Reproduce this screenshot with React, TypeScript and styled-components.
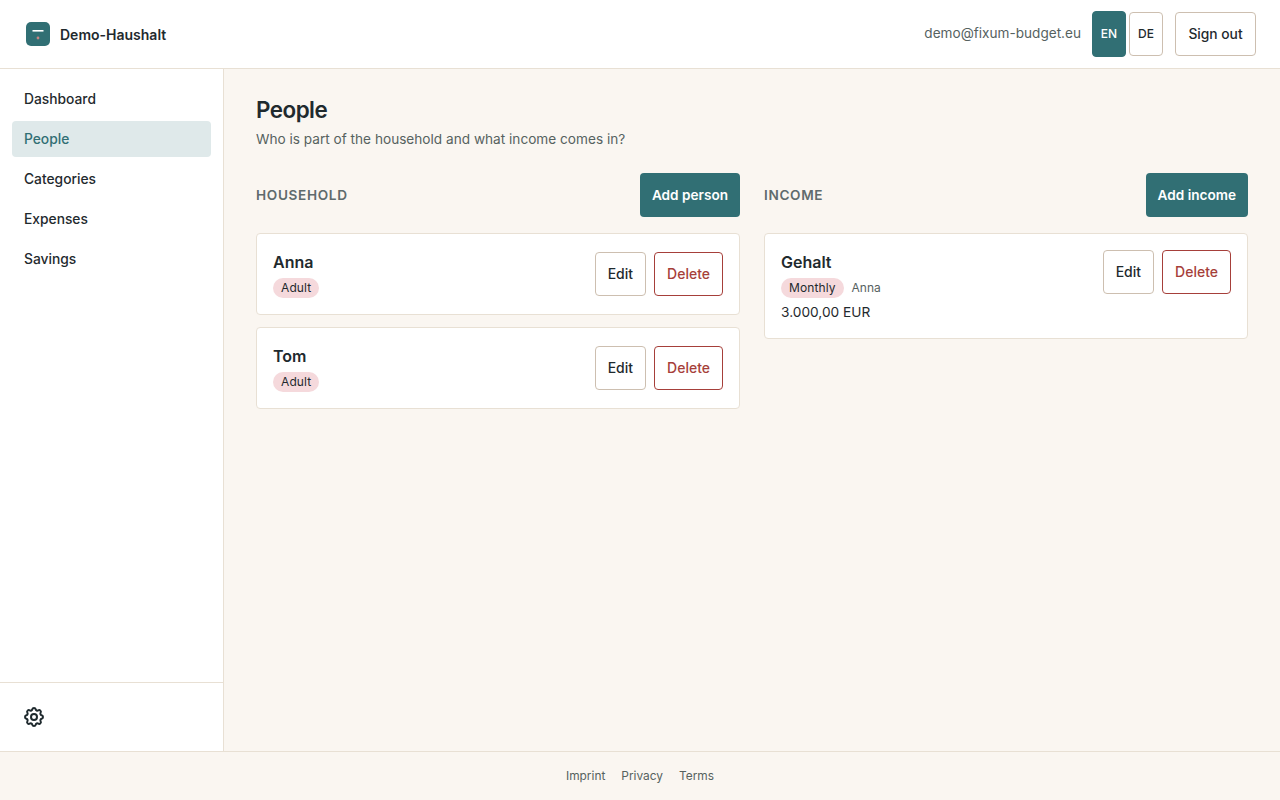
import { createGlobalStyle, styled } from "styled-components";
import { TbSettings } from "react-icons/tb";

const GlobalStyle = createGlobalStyle`
  html, body { margin: 0; padding: 0; height: 100%; }
  body {
    font-family: Inter, "Liberation Sans", sans-serif;
    color: #1f2a2e;
    background: #faf6f1;
  }
  * { box-sizing: border-box; }
`;

export default function App() {
  return (
    <>
      <GlobalStyle />
      <Page>
        <Header>
          <Brand>
            <Logo viewBox="0 0 24 24">
              <rect width="24" height="24" rx="5" fill="#316f74" />
              <rect x="6.5" y="8" width="11" height="1.6" fill="#fff" />
              <circle cx="12" cy="16" r="1.4" fill="#c98482" />
            </Logo>
            <BrandName>Demo-Haushalt</BrandName>
          </Brand>
          <HeaderRight>
            <Email>demo@fixum-budget.eu</Email>
            <LangGroup>
              <LangButton $active>EN</LangButton>
              <LangButton>DE</LangButton>
            </LangGroup>
            <SignOut>Sign out</SignOut>
          </HeaderRight>
        </Header>
        <Body>
          <Sidebar>
            <Nav>
              <NavItem>Dashboard</NavItem>
              <NavItem $active>People</NavItem>
              <NavItem>Categories</NavItem>
              <NavItem>Expenses</NavItem>
              <NavItem>Savings</NavItem>
            </Nav>
            <SidebarFoot>
              <TbSettings size={24} />
            </SidebarFoot>
          </Sidebar>
          <Main>
            <Title>People</Title>
            <Subtitle>Who is part of the household and what income comes in?</Subtitle>
            <Columns>
              <Column>
                <SectionHead>
                  <SectionTitle>HOUSEHOLD</SectionTitle>
                  <PrimaryButton>Add person</PrimaryButton>
                </SectionHead>
                <Card>
                  <CardInfo>
                    <Name>Anna</Name>
                    <MetaRow><Badge>Adult</Badge></MetaRow>
                  </CardInfo>
                  <Actions $center>
                    <Button>Edit</Button>
                    <DangerButton>Delete</DangerButton>
                  </Actions>
                </Card>
                <Card>
                  <CardInfo>
                    <Name>Tom</Name>
                    <MetaRow><Badge>Adult</Badge></MetaRow>
                  </CardInfo>
                  <Actions $center>
                    <Button>Edit</Button>
                    <DangerButton>Delete</DangerButton>
                  </Actions>
                </Card>
              </Column>
              <Column>
                <SectionHead>
                  <SectionTitle>INCOME</SectionTitle>
                  <PrimaryButton>Add income</PrimaryButton>
                </SectionHead>
                <Card>
                  <CardInfo>
                    <Name>Gehalt</Name>
                    <MetaRow>
                      <Badge>Monthly</Badge>
                      <Owner>Anna</Owner>
                    </MetaRow>
                    <Amount>3.000,00 EUR</Amount>
                  </CardInfo>
                  <Actions>
                    <Button>Edit</Button>
                    <DangerButton>Delete</DangerButton>
                  </Actions>
                </Card>
              </Column>
            </Columns>
          </Main>
        </Body>
        <Footer>
          <FooterLink>Imprint</FooterLink>
          <FooterLink>Privacy</FooterLink>
          <FooterLink>Terms</FooterLink>
        </Footer>
      </Page>
    </>
  );
}

const Page = styled.div`
  display: flex;
  flex-direction: column;
  height: 800px;
`;

const Header = styled.header`
  height: 69px;
  flex: none;
  display: flex;
  align-items: center;
  justify-content: space-between;
  padding: 0 24px 0 26px;
  background: #fff;
  border-bottom: 1px solid #e8e0d4;
`;

const Brand = styled.div`
  display: flex;
  align-items: center;
  gap: 10px;
`;

const Logo = styled.svg`
  width: 24px;
  height: 24px;
`;

const BrandName = styled.span`
  font-size: 14px;
  font-weight: 600;
`;

const HeaderRight = styled.div`
  display: flex;
  align-items: center;
`;

const Email = styled.span`
  font-size: 13.6px;
  line-height: 20px;
  padding-bottom: 2px;
  color: #56625f;
  margin-right: 11px;
`;

const LangGroup = styled.div`
  display: flex;
  gap: 3px;
  margin-right: 12px;
`;

const LangButton = styled.button<{ $active?: boolean }>`
  width: 34px;
  height: ${({ $active }) => ($active ? "46px" : "44px")};
  align-self: center;
  padding: 0 0 1px;
  font: 500 12px Inter, sans-serif;
  border-radius: 4px;
  border: 1px solid ${({ $active }) => ($active ? "#316f74" : "#cdbfb0")};
  background: ${({ $active }) => ($active ? "#316f74" : "#fff")};
  color: ${({ $active }) => ($active ? "#fff" : "#1f2a2e")};
`;

const Button = styled.button`
  height: 44px;
  padding: 0 12px 1px;
  font: 500 14px Inter, sans-serif;
  background: #fff;
  color: #1f2a2e;
  border: 1px solid #cdbfb0;
  border-radius: 4px;
`;

const SignOut = styled(Button)`
  width: 81px;
  padding: 0 0 1px;
  font-size: 13.8px;
`;

const DangerButton = styled(Button)`
  color: #a63f3a;
  border-color: #a63f3a;
`;

const PrimaryButton = styled(Button)`
  background: #316f74;
  border: none;
  color: #fff;
  font-size: 13.6px;
  font-weight: 600;
  padding: 0 12px;
`;

const Body = styled.div`
  flex: 1;
  display: flex;
  min-height: 0;
`;

const Sidebar = styled.aside`
  width: 224px;
  flex: none;
  display: flex;
  flex-direction: column;
  justify-content: space-between;
  background: #fff;
  border-right: 1px solid #e8e0d4;
`;

const Nav = styled.nav`
  display: flex;
  flex-direction: column;
  gap: 4px;
  padding: 12px;
`;

const NavItem = styled.a<{ $active?: boolean }>`
  height: 36px;
  display: flex;
  align-items: center;
  padding: 0 12px;
  font-size: 13.8px;
  font-weight: 500;
  border-radius: 4px;
  color: ${({ $active }) => ($active ? "#316f74" : "#1f2a2e")};
  background: ${({ $active }) => ($active ? "#dfe9ea" : "transparent")};
`;

const SidebarFoot = styled.div`
  height: 69px;
  display: flex;
  align-items: center;
  padding: 0 22px;
  border-top: 1px solid #e8e0d4;
`;

const Main = styled.main`
  flex: 1;
  padding: 24px 32px;
`;

const Title = styled.h1`
  margin: 2px 0 0;
  font-size: 22.4px;
  line-height: 30px;
  font-weight: 600;
  letter-spacing: -0.5px;
`;

const Subtitle = styled.p`
  margin: 4px 0 0;
  font-size: 13.63px;
  line-height: 20px;
  color: #56625f;
`;

const Columns = styled.div`
  display: grid;
  grid-template-columns: 484px 484px;
  gap: 24px;
  margin-top: 24px;
`;

const Column = styled.section`
  display: flex;
  flex-direction: column;
  gap: 12px;
`;

const SectionHead = styled.div`
  display: flex;
  align-items: center;
  justify-content: space-between;
  margin-bottom: 4px;
`;

const SectionTitle = styled.h2`
  margin: 0;
  font-size: 13.6px;
  font-weight: 600;
  letter-spacing: 0.65px;
  color: #5f6b6d;
`;

const Card = styled.div`
  display: flex;
  justify-content: space-between;
  padding: 16px;
  background: #fff;
  border: 1px solid #e8e0d4;
  border-radius: 4px;
`;

const CardInfo = styled.div`
  display: flex;
  flex-direction: column;
  gap: 4px;
`;

const Name = styled.div`
  font-size: 16px;
  line-height: 24px;
  font-weight: 600;
`;

const MetaRow = styled.div`
  display: flex;
  align-items: center;
  gap: 8px;
  height: 20px;
`;

const Badge = styled.span`
  height: 20px;
  display: inline-flex;
  align-items: center;
  padding: 0 8px 1px;
  font-size: 12px;
  font-weight: 400;
  letter-spacing: 0.1px;
  border-radius: 10px;
  background: #f5d9dc;
`;

const Owner = styled.span`
  font-size: 12px;
  color: #56625f;
  padding-bottom: 1px;
`;

const Amount = styled.div`
  font-size: 13.7px;
  line-height: 20px;
`;

const Actions = styled.div<{ $center?: boolean }>`
  display: flex;
  gap: 8px;
  align-self: ${({ $center }) => ($center ? "center" : "flex-start")};
`;

const Footer = styled.footer`
  height: 49px;
  flex: none;
  display: flex;
  align-items: center;
  justify-content: center;
  gap: 16px;
  padding-bottom: 2px;
  border-top: 1px solid #e8e0d4;
`;

const FooterLink = styled.a`
  font-size: 11.9px;
  color: #56625f;
`;
